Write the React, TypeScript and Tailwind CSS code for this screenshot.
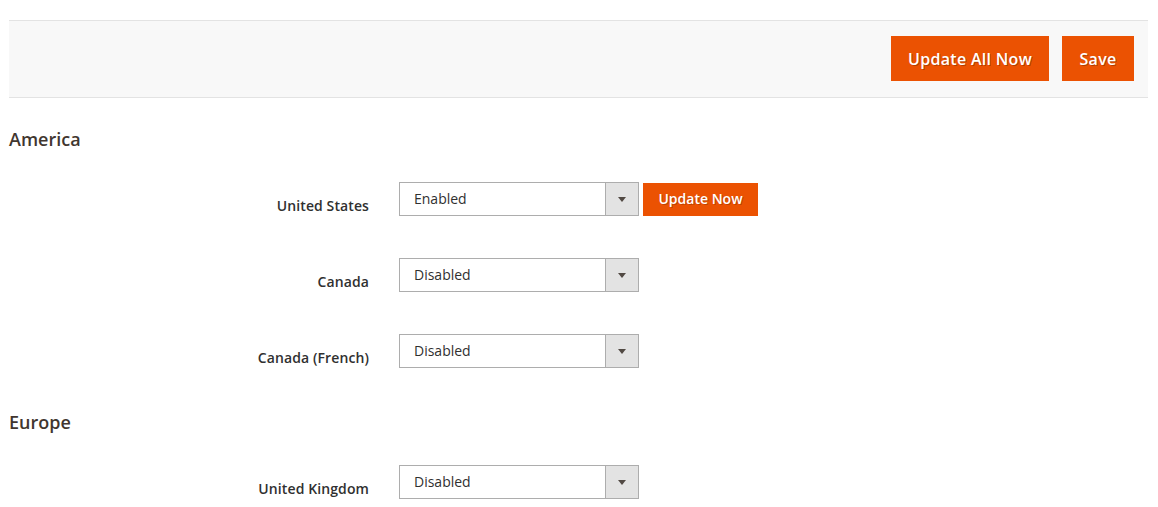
import React from "react";

type Row = { label: string; value: string; action?: boolean };

const groups: { title: string; rows: Row[] }[] = [
  {
    title: "America",
    rows: [
      { label: "United States", value: "Enabled", action: true },
      { label: "Canada", value: "Disabled" },
      { label: "Canada (French)", value: "Disabled" },
    ],
  },
  {
    title: "Europe",
    rows: [{ label: "United Kingdom", value: "Disabled" }],
  },
];

function SelectBox({ value }: { value: string }) {
  return (
    <div className="flex h-[34px] w-[240px] border border-[#adadad] bg-white">
      <div className="flex flex-1 items-center pl-[14px] pb-[2px] text-[14px] text-[#303030]">
        {value}
      </div>
      <div className="flex w-[33px] items-center justify-center border-l border-[#adadad] bg-[#e3e3e3]">
        <svg width="8" height="5" viewBox="0 0 8 5" aria-hidden="true">
          <path d="M0 0h8L4 5z" fill="#514943" />
        </svg>
      </div>
    </div>
  );
}

export default function App() {
  return (
    <div
      className="min-h-[507px] bg-white pl-[9px] pr-[10px] pt-[20px]"
      style={{ fontFamily: '"Open Sans", "Liberation Sans", sans-serif' }}
    >
      <div className="flex h-[78px] items-start justify-end gap-[13px] border-y border-[#e3e3e3] bg-[#f8f8f8] pr-[14px] pt-[15px]">
        <button
          type="button"
          className="h-[45px] w-[158px] bg-[#eb5202] text-[16px] font-semibold tracking-[0.3px] text-white [text-shadow:1px_1px_0_rgba(0,0,0,0.25)]"
        >
          Update All Now
        </button>
        <button
          type="button"
          className="h-[45px] w-[72px] bg-[#eb5202] text-[16px] font-semibold tracking-[0.3px] text-white [text-shadow:1px_1px_0_rgba(0,0,0,0.25)]"
        >
          Save
        </button>
      </div>

      {groups.map((group, gi) => (
        <div key={group.title} className={gi === 0 ? "mt-[29px]" : "mt-[42px]"}>
          <h2 className="text-[18px] leading-[24px] font-semibold text-[#41362f]">
            {group.title}
          </h2>
          <div className="mt-[31px] flex flex-col gap-[42px]">
            {group.rows.map((row) => (
              <div key={row.label} className="flex items-start">
                <div className="w-[360px] pt-[14px] text-right text-[14px] leading-[20px] font-semibold tracking-[0.1px] text-[#303030]">
                  {row.label}
                </div>
                <div className="ml-[30px] flex items-start gap-[4px]">
                  <SelectBox value={row.value} />
                  {row.action && (
                    <button
                      type="button"
                      className="mt-[1px] h-[33px] w-[115px] bg-[#eb5202] pb-[2px] text-[14px] font-semibold text-white [text-shadow:1px_1px_0_rgba(0,0,0,0.2)]"
                    >
                      Update Now
                    </button>
                  )}
                </div>
              </div>
            ))}
          </div>
        </div>
      ))}
    </div>
  );
}
